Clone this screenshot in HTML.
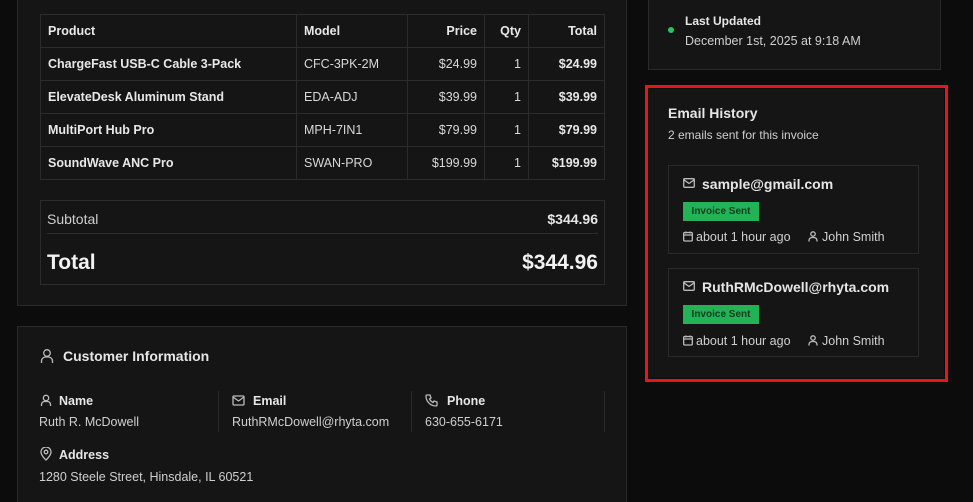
<!DOCTYPE html>
<html><head><meta charset="utf-8"><style>
*{box-sizing:border-box;margin:0;padding:0}
html,body{width:973px;height:502px;overflow:hidden}
body{background:#0c0c0c;font-family:"Liberation Sans",sans-serif;color:#e6e6e6;position:relative;font-size:13px}
.abs{position:absolute}
.card{position:absolute;background:#151515;border:1px solid #2a2a2a}
table{border-collapse:collapse;position:absolute;left:40px;top:14px;width:565px}
td,th{border:1px solid #2c2c2c;height:33px;padding:0 7px;font-size:12.5px}
th{font-weight:bold;color:#e8e8e8;text-align:left}
td{color:#d8d8d8}
td.b{font-weight:bold;color:#e8e8e8}
.r{text-align:right}
.lbl{font-weight:bold;font-size:12.5px;color:#e6e6e6}
.val{font-size:12.5px;color:#cfcfcf}
svg{position:absolute;fill:none;stroke:#bbb;stroke-width:1.3}
.badge{position:absolute;background:#22b357;color:#0d3b1c;font-size:10px;font-weight:bold;text-align:center;height:19px;line-height:19px;width:76px}
.item{position:absolute;left:668px;width:251px;height:89px;border:1px solid #2a2a2a;background:#151515}
</style></head><body>
<div class="card" style="left:17px;top:-5px;width:610px;height:311px"></div>
<table>
<tr><th style="width:256px">Product</th><th style="width:111px">Model</th><th class="r" style="width:77px">Price</th><th class="r" style="width:44px">Qty</th><th class="r">Total</th></tr>
<tr><td class="b">ChargeFast USB-C Cable 3-Pack</td><td>CFC-3PK-2M</td><td class="r">$24.99</td><td class="r">1</td><td class="r b">$24.99</td></tr>
<tr><td class="b">ElevateDesk Aluminum Stand</td><td>EDA-ADJ</td><td class="r">$39.99</td><td class="r">1</td><td class="r b">$39.99</td></tr>
<tr><td class="b">MultiPort Hub Pro</td><td>MPH-7IN1</td><td class="r">$79.99</td><td class="r">1</td><td class="r b">$79.99</td></tr>
<tr><td class="b">SoundWave ANC Pro</td><td>SWAN-PRO</td><td class="r">$199.99</td><td class="r">1</td><td class="r b">$199.99</td></tr>
</table>
<div class="abs" style="left:40px;top:200px;width:565px;height:85px;border:1px solid #2c2c2c"></div>
<div class="abs" style="left:47px;top:211px;font-size:14px;color:#cfcfcf">Subtotal</div>
<div class="abs" style="right:375px;top:211px;font-size:14px;font-weight:bold">$344.96</div>
<div class="abs" style="left:47px;top:233px;width:551px;height:1px;background:#2c2c2c"></div>
<div class="abs" style="left:47px;top:251px;font-size:21px;font-weight:bold;color:#f2f2f2">Total</div>
<div class="abs" style="right:375px;top:251px;font-size:21px;font-weight:bold;color:#f2f2f2">$344.96</div>

<div class="card" style="left:17px;top:326px;width:610px;height:190px"></div>
<svg style="left:40px;top:348px" width="14" height="16" viewBox="0 0 14 16"><circle cx="7" cy="5" r="3.3"/><path d="M1.5 15v-2a4 4 0 0 1 4-4h3a4 4 0 0 1 4 4v2"/></svg>
<div class="abs" style="left:63px;top:348px;font-size:14px;font-weight:bold">Customer Information</div>
<svg style="left:40px;top:394px" width="12" height="13" viewBox="0 0 12 13"><circle cx="6" cy="4" r="2.7"/><path d="M1.5 12v-1.5a3 3 0 0 1 3-3h3a3 3 0 0 1 3 3V12"/></svg>
<div class="abs lbl" style="left:59px;top:394px">Name</div>
<div class="abs val" style="left:39px;top:415px">Ruth R. McDowell</div>
<div class="abs" style="left:218px;top:391px;width:1px;height:41px;background:#2a2a2a"></div>
<svg style="left:232px;top:395px" width="13" height="11" viewBox="0 0 13 11"><rect x="1" y="1" width="11" height="9" rx="1"/><path d="M1 2l5.5 4L12 2"/></svg>
<div class="abs lbl" style="left:253px;top:394px">Email</div>
<div class="abs val" style="left:232px;top:415px">RuthRMcDowell@rhyta.com</div>
<div class="abs" style="left:411px;top:391px;width:1px;height:41px;background:#2a2a2a"></div>
<svg style="left:425px;top:394px" width="13" height="13" viewBox="0 0 13 13"><path d="M2 1h3l1 3-1.5 1a7 7 0 0 0 3.5 3.5L9 7l3 1v3a1 1 0 0 1-1 1A10 10 0 0 1 1 2a1 1 0 0 1 1-1z"/></svg>
<div class="abs lbl" style="left:447px;top:394px">Phone</div>
<div class="abs val" style="left:425px;top:415px">630-655-6171</div>
<div class="abs" style="left:604px;top:391px;width:1px;height:41px;background:#2a2a2a"></div>
<svg style="left:40px;top:447px" width="12" height="14" viewBox="0 0 12 14"><path d="M6 13s5-4.5 5-8a5 5 0 0 0-10 0c0 3.5 5 8 5 8z"/><circle cx="6" cy="5" r="1.8"/></svg>
<div class="abs lbl" style="left:59px;top:448px">Address</div>
<div class="abs val" style="left:39px;top:470px">1280 Steele Street, Hinsdale, IL 60521</div>

<div class="card" style="left:648px;top:-5px;width:293px;height:75px"></div>
<div class="abs" style="left:668px;top:27px;width:6px;height:6px;border-radius:50%;background:#22c55e"></div>
<div class="abs" style="left:685px;top:14px;font-size:12px;font-weight:bold">Last Updated</div>
<div class="abs" style="left:685px;top:34px;font-size:12.5px;color:#cfcfcf">December 1st, 2025 at 9:18 AM</div>

<div class="abs" style="left:645px;top:85px;width:303px;height:297px;border:3px solid #e81616"></div>
<div class="abs" style="left:649px;top:89px;width:295px;height:289px;background:#151515"></div>
<div class="abs" style="left:668px;top:105px;font-size:14px;font-weight:bold">Email History</div>
<div class="abs" style="left:668px;top:128px;font-size:12px;color:#cfcfcf">2 emails sent for this invoice</div>

<div class="item" style="top:165px"></div>
<svg style="left:683px;top:178px" width="12" height="10" viewBox="0 0 12 10"><rect x="0.7" y="0.7" width="10.6" height="8.6" rx="1"/><path d="M0.7 1.7L6 5.5l5.3-3.8"/></svg>
<div class="abs" style="left:702px;top:176px;font-size:14px;font-weight:bold">sample@gmail.com</div>
<div class="badge" style="left:683px;top:202px">Invoice Sent</div>
<svg style="left:683px;top:231px" width="10" height="11" viewBox="0 0 10 11"><rect x="0.7" y="1.5" width="8.6" height="8.5" rx="1"/><path d="M0.7 4h8.6M3 0.5v2M7 0.5v2"/></svg>
<div class="abs" style="left:696px;top:230px;font-size:12.5px;color:#cfcfcf">about 1 hour ago</div>
<svg style="left:808px;top:231px" width="10" height="11" viewBox="0 0 10 11"><circle cx="5" cy="3" r="2.2"/><path d="M1 10.5v-1a3 3 0 0 1 3-3h2a3 3 0 0 1 3 3v1"/></svg>
<div class="abs" style="left:822px;top:230px;font-size:12.5px;color:#cfcfcf">John Smith</div>

<div class="item" style="top:268px"></div>
<svg style="left:683px;top:281px" width="12" height="10" viewBox="0 0 12 10"><rect x="0.7" y="0.7" width="10.6" height="8.6" rx="1"/><path d="M0.7 1.7L6 5.5l5.3-3.8"/></svg>
<div class="abs" style="left:702px;top:279px;font-size:14px;font-weight:bold">RuthRMcDowell@rhyta.com</div>
<div class="badge" style="left:683px;top:305px">Invoice Sent</div>
<svg style="left:683px;top:335px" width="10" height="11" viewBox="0 0 10 11"><rect x="0.7" y="1.5" width="8.6" height="8.5" rx="1"/><path d="M0.7 4h8.6M3 0.5v2M7 0.5v2"/></svg>
<div class="abs" style="left:696px;top:334px;font-size:12.5px;color:#cfcfcf">about 1 hour ago</div>
<svg style="left:808px;top:335px" width="10" height="11" viewBox="0 0 10 11"><circle cx="5" cy="3" r="2.2"/><path d="M1 10.5v-1a3 3 0 0 1 3-3h2a3 3 0 0 1 3 3v1"/></svg>
<div class="abs" style="left:822px;top:334px;font-size:12.5px;color:#cfcfcf">John Smith</div>
</body></html>
